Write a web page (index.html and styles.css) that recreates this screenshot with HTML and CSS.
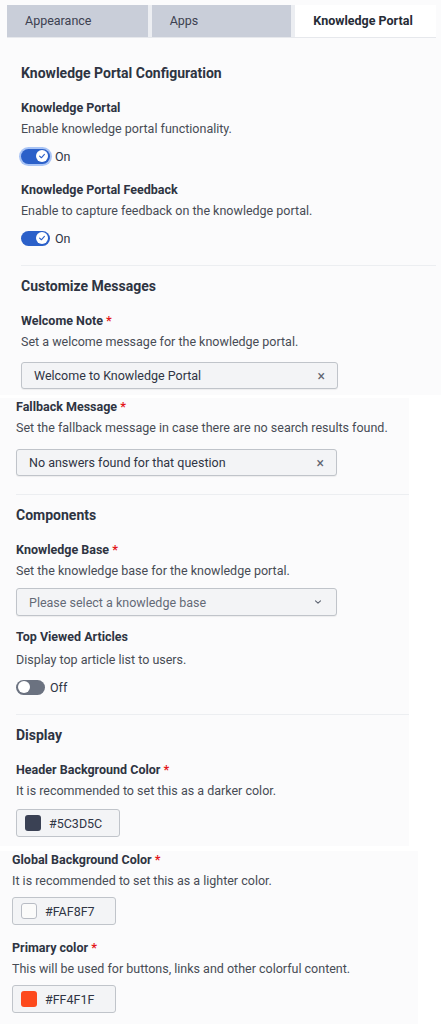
FILE: index.html
```html
<!DOCTYPE html>
<html lang="en">
<head>
<meta charset="utf-8">
<title>Knowledge Portal</title>
<link rel="stylesheet" href="styles.css">
</head>
<body>
<div class="panel panel-a">
  <div class="tabs">
    <div class="tab">Appearance</div>
    <div class="tab">Apps</div>
    <div class="tab active">Knowledge Portal</div>
  </div>

  <h2 class="heading first">Knowledge Portal Configuration</h2>

  <div class="label">Knowledge Portal</div>
  <div class="desc">Enable knowledge portal functionality.</div>
  <div class="toggle-row">
    <span class="toggle on focus"><span class="knob"><svg viewBox="0 0 10 10" width="8" height="8"><path d="M2 5.2 L4.2 7.2 L8 3" fill="none" stroke="#2a5fc9" stroke-width="1.4" stroke-linecap="round" stroke-linejoin="round"/></svg></span></span>
    <span class="toggle-text">On</span>
  </div>

  <div class="label gap-toggle">Knowledge Portal Feedback</div>
  <div class="desc">Enable to capture feedback on the knowledge portal.</div>
  <div class="toggle-row">
    <span class="toggle on"><span class="knob"><svg viewBox="0 0 10 10" width="8" height="8"><path d="M2 5.2 L4.2 7.2 L8 3" fill="none" stroke="#2a5fc9" stroke-width="1.4" stroke-linecap="round" stroke-linejoin="round"/></svg></span></span>
    <span class="toggle-text">On</span>
  </div>

  <hr class="divider">

  <h2 class="heading">Customize Messages</h2>
  <div class="label">Welcome Note <span class="req">*</span></div>
  <div class="desc">Set a welcome message for the knowledge portal.</div>
  <div class="input text-input"><span class="value">Welcome to Knowledge Portal</span><span class="clear">×</span></div>
</div>

<div class="panel panel-b">
  <div class="label top">Fallback Message <span class="req">*</span></div>
  <div class="desc">Set the fallback message in case there are no search results found.</div>
  <div class="input text-input"><span class="value">No answers found for that question</span><span class="clear">×</span></div>

  <hr class="divider">

  <h2 class="heading">Components</h2>
  <div class="label">Knowledge Base <span class="req">*</span></div>
  <div class="desc">Set the knowledge base for the knowledge portal.</div>
  <div class="input select"><span class="value placeholder">Please select a knowledge base</span><svg class="chev" viewBox="0 0 10 10" width="10" height="10"><path d="M2.5 3.8 L5 6.2 L7.5 3.8" fill="none" stroke="#5b6270" stroke-width="1.1" stroke-linecap="round" stroke-linejoin="round"/></svg></div>

  <div class="label gap-input">Top Viewed Articles</div>
  <div class="desc wide">Display top article list to users.</div>
  <div class="toggle-row">
    <span class="toggle off"><span class="knob"></span></span>
    <span class="toggle-text">Off</span>
  </div>

  <hr class="divider">

  <h2 class="heading">Display</h2>
  <div class="label">Header Background Color <span class="req">*</span></div>
  <div class="desc">It is recommended to set this as a darker color.</div>
  <div class="color-input"><span class="swatch" style="background:#3a4154"></span><span class="hex">#5C3D5C</span></div>
</div>

<div class="panel panel-c">
  <div class="label top">Global Background Color <span class="req">*</span></div>
  <div class="desc">It is recommended to set this as a lighter color.</div>
  <div class="color-input"><span class="swatch light" style="background:#fbfbfa"></span><span class="hex">#FAF8F7</span></div>

  <div class="label gap-color">Primary color <span class="req">*</span></div>
  <div class="desc">This will be used for buttons, links and other colorful content.</div>
  <div class="color-input"><span class="swatch" style="background:#fd4a1d"></span><span class="hex">#FF4F1F</span></div>
</div>
</body>
</html>
```

FILE: styles.css
```css
* { box-sizing: border-box; }
html, body { margin: 0; padding: 0; background: #ffffff; }
body {
  width: 441px;
  font-family: Roboto, "Liberation Sans", Arial, sans-serif;
  color: #2f3544;
  font-size: 12.5px;
}

.panel { background: #fbfbfc; }
.panel-a { width: 441px; padding: 5px 5px 7px 21px; height: 395px; }
.panel-b { width: 409px; padding: 0 0 0 16px; height: 448px; }
.panel-c { width: 418px; padding: 0 0 0 12px; height: 181px; }

.tabs {
  display: flex;
  gap: 4px;
  margin-left: -14px;
  margin-right: 0;
  height: 33px;
  background: #eceef2;
  border-bottom: 1px solid #e6e8ec;
}
.tab {
  width: 141px;
  height: 32px;
  background: #c9ced9;
  color: #3c4150;
  font-size: 12.5px;
  line-height: 32px;
  padding-left: 18px;
}
.tab:nth-child(2) { width: 140px; }
.tab.active {
  background: #ffffff;
  font-weight: 700;
  color: #262b36;
  padding-left: 18px;
}

.heading {
  margin: 10px 0 0;
  font-size: 14px;
  line-height: 20px;
  font-weight: 700;
  color: #2e3442;
}
.heading.first { margin-top: 25px; }

.label {
  margin-top: 16px;
  font-size: 12.5px;
  line-height: 18px;
  font-weight: 700;
  color: #2e3442;
}
.label.top { margin-top: 3px; }
.panel-c .label.top { margin-top: 5px; }
.label.gap-toggle { margin-top: 16px; }
.label.gap-input { margin-top: 12px; }
.label.gap-color { margin-top: 14px; }
.req { color: #e3171b; font-weight: 700; }

.desc {
  margin-top: 3px;
  font-size: 12.5px;
  line-height: 18px;
  color: #474c55;
}
.desc.wide { margin-top: 5px; }

.toggle-row {
  margin-top: 9px;
  height: 18px;
  display: flex;
  align-items: center;
  gap: 5px;
}
.toggle {
  position: relative;
  width: 29px;
  height: 15px;
  border-radius: 8px;
  display: inline-flex;
  align-items: center;
  padding: 0 2px;
}
.toggle.on { background: #2b60c9; justify-content: flex-end; }
.toggle.off { background: #6b7280; justify-content: flex-start; }
.toggle.focus { box-shadow: 0 0 0 2px #a9c4f5; }
.knob {
  width: 12px;
  height: 12px;
  border-radius: 50%;
  background: #ffffff;
  display: inline-flex;
  align-items: center;
  justify-content: center;
}
.toggle-text { font-size: 12.5px; color: #2f3544; }

.divider {
  margin: 18px 0 0;
  border: 0;
  border-top: 1px solid #eceef1;
  height: 0;
}

.input {
  margin-top: 11px;
  width: 317px;
  height: 27px;
  border: 1px solid #c0c4ca;
  border-radius: 3px;
  background: #f3f4f6;
  box-shadow: 0 1px 1px rgba(0,0,0,0.06);
  display: flex;
  align-items: center;
  justify-content: space-between;
  padding: 0 12px 0 12px;
  font-size: 12.5px;
  color: #2f3544;
}
.panel-b .text-input { margin-top: 12px; width: 321px; }
.input .clear { font-size: 14px; color: #5f6470; }
.input.select { margin-top: 8px; height: 28px; width: 321px; }
.placeholder { color: #646a76; }
.chev { margin-right: 1px; }

.color-input {
  margin-top: 9px;
  width: 104px;
  height: 28px;
  border: 1px solid #c0c4ca;
  border-radius: 3px;
  background: #f3f4f6;
  display: flex;
  align-items: center;
  gap: 8px;
  padding-left: 8px;
  font-size: 12.5px;
  color: #2f3544;
}
.panel-c .color-input { margin-top: 7px; }
.swatch {
  width: 16px;
  height: 16px;
  border-radius: 3px;
  display: inline-block;
}
.swatch.light { border: 1px solid #b8bcc4; }
```
